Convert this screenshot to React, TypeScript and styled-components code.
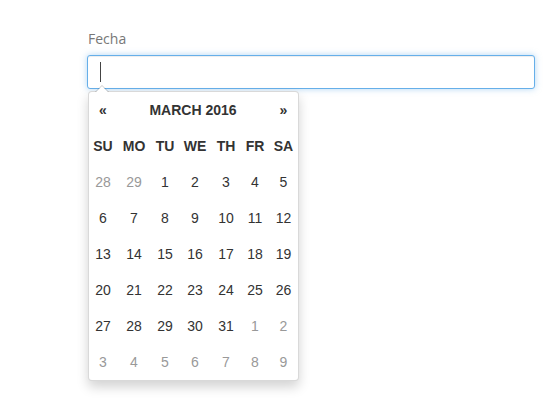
import styled, { createGlobalStyle } from "styled-components";

const GlobalStyle = createGlobalStyle`
  html, body {
    margin: 0;
    padding: 0;
    background: #fff;
  }
  * {
    box-sizing: border-box;
  }
`;

const Page = styled.div`
  padding: 29px 8px 20px 87px;
  font-family: "Liberation Sans", Arial, sans-serif;
  font-size: 14px;
  color: #333;
`;

const Label = styled.label`
  display: block;
  font-family: "Open Sans", sans-serif;
  font-size: 14px;
  line-height: 20px;
  color: #777;
  margin: 0 0 6px 1px;
`;

const Field = styled.div`
  position: relative;
`;

const Input = styled.input`
  display: block;
  width: 100%;
  height: 34px;
  padding: 6px 12px;
  border: 1px solid #66afe9;
  border-radius: 3px;
  outline: 0;
  background: #fff;
  font: inherit;
  box-shadow: inset 0 1px 1px rgba(0, 0, 0, 0.075), 0 0 6px rgba(102, 175, 233, 0.5);
`;

// fake text cursor, the input is shown focused
const Caret = styled.span`
  position: absolute;
  left: 13px;
  top: 7px;
  width: 1px;
  height: 20px;
  background: #444;
`;

const Dropdown = styled.div`
  position: relative;
  margin: 2px 0 0 1px;
  width: 211px;
  background: #fff;
  border: 1px solid rgba(0, 0, 0, 0.15);
  border-radius: 4px;
  box-shadow: 0 6px 12px rgba(0, 0, 0, 0.175);

  &::before {
    content: "";
    position: absolute;
    top: -7px;
    left: 6px;
    border-left: 7px solid transparent;
    border-right: 7px solid transparent;
    border-bottom: 7px solid rgba(0, 0, 0, 0.2);
  }
  &::after {
    content: "";
    position: absolute;
    top: -6px;
    left: 7px;
    border-left: 6px solid transparent;
    border-right: 6px solid transparent;
    border-bottom: 6px solid #fff;
  }
`;

const Grid = styled.div`
  display: grid;
  grid-template-columns: 28px 34px 28px 32px 30px 28px 29px;
  grid-auto-rows: 36px;
`;

const Cell = styled.div<{ $muted?: boolean; $bold?: boolean; $span?: number }>`
  display: flex;
  align-items: center;
  justify-content: center;
  grid-column: span ${(p) => p.$span ?? 1};
  color: ${(p) => (p.$muted ? "#999" : "#333")};
  font-weight: ${(p) => (p.$bold ? 700 : 400)};
  white-space: nowrap;
`;

const days = ["SU", "MO", "TU", "WE", "TH", "FR", "SA"];

const cells: { n: number; muted: boolean }[] = [
  { n: 28, muted: true },
  { n: 29, muted: true },
  ...Array.from({ length: 31 }, (_, i) => ({ n: i + 1, muted: false })),
  ...Array.from({ length: 9 }, (_, i) => ({ n: i + 1, muted: true })),
];

const App = () => {
  return (
    <Page>
      <GlobalStyle />
      <Label>Fecha</Label>
      <Field>
        <Input readOnly />
        <Caret />
      </Field>
      <Dropdown>
        <Grid>
          <Cell $bold>«</Cell>
          <Cell $bold $span={5}>
            MARCH 2016
          </Cell>
          <Cell $bold>»</Cell>
          {days.map((d) => (
            <Cell key={d} $bold>
              {d}
            </Cell>
          ))}
          {cells.map((c, i) => (
            <Cell key={i} $muted={c.muted}>
              {c.n}
            </Cell>
          ))}
        </Grid>
      </Dropdown>
    </Page>
  );
};

export default App;
